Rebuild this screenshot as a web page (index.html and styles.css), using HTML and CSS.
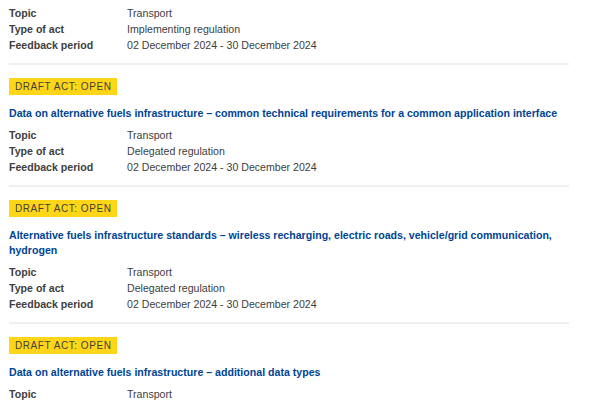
FILE: index.html
```html
<!DOCTYPE html>
<html>
<head>
<meta charset="utf-8">
<link rel="stylesheet" href="styles.css">
</head>
<body>
<div class="list">
  <div class="item first">
    <dl class="meta">
      <dt>Topic</dt><dd>Transport</dd>
      <dt>Type of act</dt><dd>Implementing regulation</dd>
      <dt>Feedback period</dt><dd>02 December 2024 - 30 December 2024</dd>
    </dl>
  </div>
  <div class="item">
    <span class="badge">Draft act: Open</span>
    <a class="title" href="#">Data on alternative fuels infrastructure – common technical requirements for a common application interface</a>
    <dl class="meta">
      <dt>Topic</dt><dd>Transport</dd>
      <dt>Type of act</dt><dd>Delegated regulation</dd>
      <dt>Feedback period</dt><dd>02 December 2024 - 30 December 2024</dd>
    </dl>
  </div>
  <div class="item">
    <span class="badge">Draft act: Open</span>
    <a class="title" href="#">Alternative fuels infrastructure standards – wireless recharging, electric roads, vehicle/grid communication, hydrogen</a>
    <dl class="meta">
      <dt>Topic</dt><dd>Transport</dd>
      <dt>Type of act</dt><dd>Delegated regulation</dd>
      <dt>Feedback period</dt><dd>02 December 2024 - 30 December 2024</dd>
    </dl>
  </div>
  <div class="item">
    <span class="badge">Draft act: Open</span>
    <a class="title" href="#">Data on alternative fuels infrastructure – additional data types</a>
    <dl class="meta">
      <dt>Topic</dt><dd>Transport</dd>
      <dt>Type of act</dt><dd>Delegated regulation</dd>
      <dt>Feedback period</dt><dd>02 December 2024 - 30 December 2024</dd>
    </dl>
  </div>
</div>
</body>
</html>
```
FILE: styles.css
```css
html, body {
  margin: 0;
  padding: 0;
  background: #fff;
}
body {
  font-family: "Liberation Sans", Arial, sans-serif;
  font-size: 10.6px;
  color: #404040;
  overflow: hidden;
  height: 400px;
}
.list {
  width: 560px;
  margin-left: 9px;
  padding-top: 5px;
}
.item {
  display: flex;
  flex-direction: column;
  align-items: flex-start;
  padding: 13px 0 10px;
  border-bottom: 2px solid #efefef;
}
.item.first {
  padding-top: 0;
  padding-bottom: 10px;
}
.badge {
  display: inline-block;
  background: #ffd617;
  color: #404040;
  font-size: 10px;
  letter-spacing: 0.55px;
  text-transform: uppercase;
  line-height: 17px;
  padding: 0 6px 0 6px;
}
.title {
  margin-top: 11px;
  color: #004494;
  font-weight: bold;
  font-size: 10.6px;
  line-height: 15px;
  text-decoration: none;
}
.meta {
  display: grid;
  grid-template-columns: 118px 1fr;
  margin: 6px 0 0;
  line-height: 16px;
}
.item.first .meta {
  margin-top: 0;
}
.meta dt {
  font-weight: bold;
  color: #404040;
}
.meta dd {
  margin: 0;
  color: #404040;
}
```
